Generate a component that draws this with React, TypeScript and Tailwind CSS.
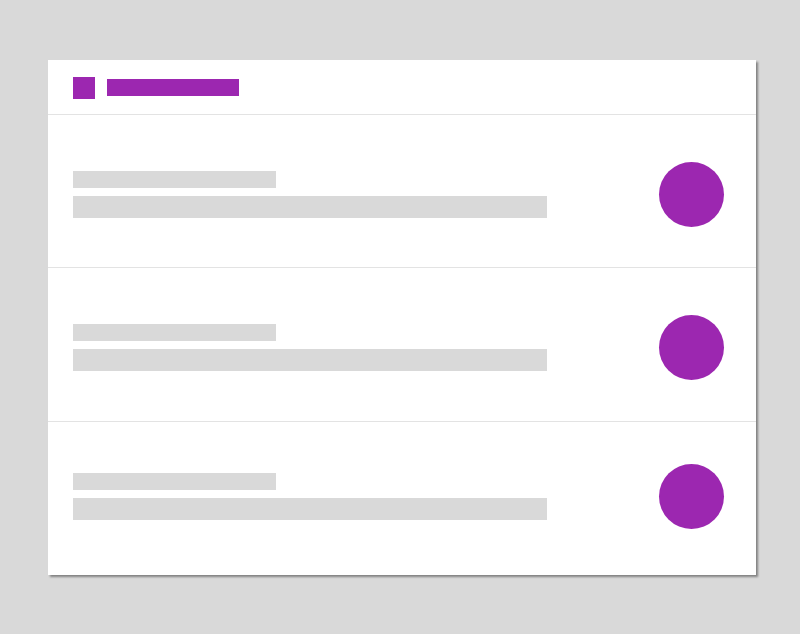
import React from 'react';

const rows = [
    { h: 'h-[153px]', pad: 'pt-[7px]', border: 'border-b' },
    { h: 'h-[154px]', pad: 'pt-[6px]', border: 'border-b' },
    { h: 'flex-1', pad: 'pb-[5px]', border: '' },
];

export default function App() {
    return (
        <div className="w-[800px] h-[634px] bg-[#d9d9d9] pt-[60px] pl-[48px]">
            <div className="w-[708px] h-[515px] bg-white flex flex-col shadow-[2px_2px_2px_rgba(0,0,0,0.4)]">
                {/* Header */}
                <div className="h-[55px] shrink-0 flex items-center gap-3 pl-[25px] pt-[1px] border-b border-[#e3e3e3]">
                    <div className="w-[22px] h-[22px] bg-[#9c27b0]" />
                    <div className="w-[132px] h-[17px] bg-[#9c27b0]" />
                </div>

                {/* Rows */}
                {rows.map((r, i) => (
                    <div
                        key={i}
                        className={`${r.h} ${r.pad} ${r.border} border-[#e3e3e3] flex items-center justify-between pl-[25px] pr-[32px]`}
                    >
                        <div className="flex flex-col gap-2">
                            <div className="w-[203px] h-[17px] bg-[#d9d9d9]" />
                            <div className="w-[474px] h-[22px] bg-[#d9d9d9]" />
                        </div>
                        <div className="w-[65px] h-[65px] rounded-full bg-[#9c27b0]" />
                    </div>
                ))}
            </div>
        </div>
    );
}
